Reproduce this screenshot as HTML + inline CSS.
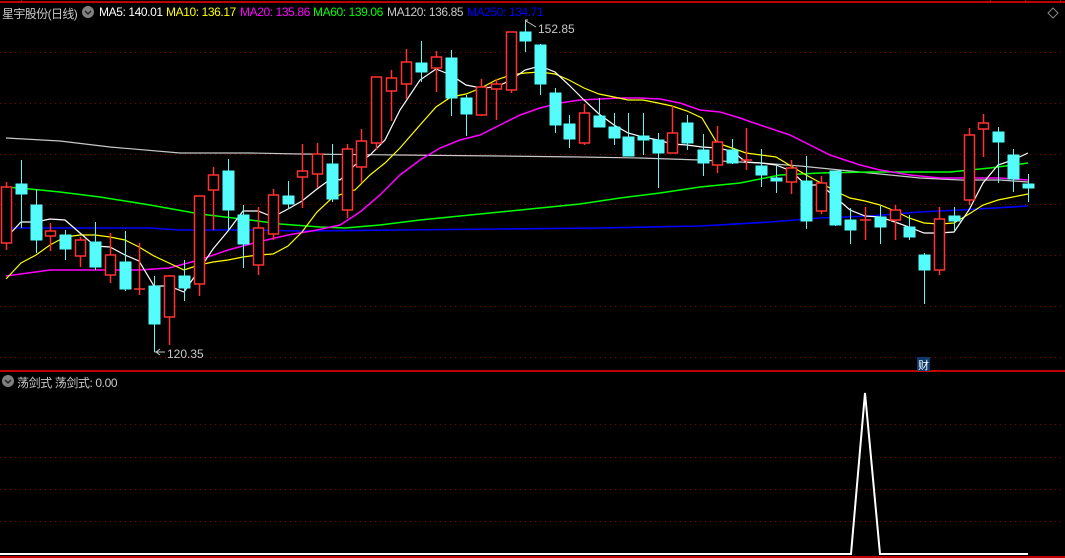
<!DOCTYPE html><html><head><meta charset="utf-8"><style>
html,body{margin:0;padding:0;background:#000;width:1065px;height:558px;overflow:hidden}
.t{position:absolute;font:12px "Liberation Sans","Noto Sans CJK SC",sans-serif;white-space:nowrap;top:5px;letter-spacing:-0.4px}
</style></head><body>
<svg width="1065" height="558" style="position:absolute;left:0;top:0" xmlns="http://www.w3.org/2000/svg">
<g stroke="#8a0000" stroke-dasharray="1,4" stroke-width="1">
<line x1="0" y1="52.5" x2="1065" y2="52.5"/><line x1="0" y1="103.5" x2="1065" y2="103.5"/><line x1="0" y1="154.5" x2="1065" y2="154.5"/><line x1="0" y1="204.5" x2="1065" y2="204.5"/><line x1="0" y1="255.5" x2="1065" y2="255.5"/><line x1="0" y1="306.5" x2="1065" y2="306.5"/><line x1="0" y1="357.5" x2="1065" y2="357.5"/>
<line x1="0" y1="424.5" x2="1065" y2="424.5"/><line x1="0" y1="457.5" x2="1065" y2="457.5"/><line x1="0" y1="489.5" x2="1065" y2="489.5"/><line x1="0" y1="521.5" x2="1065" y2="521.5"/>
</g>
<g stroke="#c00000" stroke-width="2"><line x1="0" y1="2" x2="1065" y2="2"/><line x1="0" y1="371" x2="1065" y2="371"/><line x1="0" y1="557" x2="1065" y2="557"/></g>
<g stroke="#c00000" stroke-width="1"><line x1="21.5" y1="0" x2="21.5" y2="3"/><line x1="990.5" y1="0" x2="990.5" y2="3"/><line x1="1025.5" y1="0" x2="1025.5" y2="3"/><line x1="1060.5" y1="0" x2="1060.5" y2="3"/></g>
<path d="M1053 8 L1058 13 L1053 18 L1048 13 Z" fill="none" stroke="#888" stroke-width="1"/>
<g fill="none" stroke-width="1.2">
<polyline stroke="#c8c8c8" points="6,138 60,141 110,147 180,153 250,153 300,154 400,155 500,156 580,157 640,158 700,160 760,163 800,166 860,172 920,178 960,180 1000,180 1028,182"/>
<polyline stroke="#0000ff" stroke-width="1.6" points="6,228 150,228 180,230 250,230 300,231 400,230 500,229 600,228 700,226 770,222 820,218 870,216 920,212 960,210 1028,206"/>
<polyline stroke="#00ff00" stroke-width="1.5" points="6,187 30,189 60,192 100,197 150,205 200,214 250,220 280,224 320,227 345,228 380,225 420,220 460,216 500,212 540,208 580,204 620,198 660,193 700,187 740,183 780,175 820,173 870,172 910,172 950,172 990,168 1028,163"/>
<polyline stroke="#ff00ff" stroke-width="1.5" points="6,276 50,270 95,270 139,270 169,268 199,260 228,250 258,242 288,235 317,230 340,225 360,212 380,195 400,175 420,160 440,148 460,140 480,135 500,125 520,115 540,108 560,103 580,100 600,99 620,98 640,98 660,99 680,103 700,110 720,112 740,118 760,125 790,135 810,145 830,155 860,165 880,170 910,175 940,178 970,178 1000,178 1028,180"/>
<polyline stroke="#ffff00" points="6,279 21,263 36,255 50,245 65,237 80,235 95,235 110,237 125,240 139,247 154,256 169,263 184,270 199,265 213,262 228,260 243,257 258,255 273,254 288,246 302,232 317,212 332,198 347,192 355,190 370,175 385,163 400,148 420,125 436,107 451,97 466,94 481,88 496,80 511,75 525,73 540,72 555,74 569,80 584,88 599,94 614,97 628,100 643,100 658,103 672,106 687,111 702,118 717,143 732,148 746,153 761,155 776,157 791,166 806,175 821,183 835,191 850,198 865,201 880,205 895,211 909,218 924,223 939,224 954,223 969,214 983,205 998,200 1013,197 1028,194"/>
<polyline stroke="#ffffff" points="6,238 21,222 36,222 50,219 65,220 80,233 95,246 110,247 125,255 139,261 154,286 169,286 184,292 199,270 213,249 228,231 243,211 258,211 273,217 288,209 302,201 317,189 332,178 340,180 355,165 370,155 385,140 400,110 420,80 436,69 451,75 466,85 481,88 496,87 511,80 525,70 540,66 555,72 569,85 584,100 599,114 614,125 628,133 643,137 658,140 672,144 687,145 702,147 717,148 732,151 746,162 761,163 776,165 791,171 806,185 821,185 835,197 850,210 865,216 880,217 895,222 909,227 924,233 939,233 954,232 969,210 983,183 998,165 1013,160 1028,153"/>
</g>
<g fill="#54fcfc" stroke="#54fcfc" stroke-width="1">
<line x1="21.5" y1="160" x2="21.5" y2="228"/><rect x="16" y="184" width="11" height="10"/>
<line x1="36.5" y1="189" x2="36.5" y2="253"/><rect x="31" y="205" width="11" height="35"/>
<line x1="65.5" y1="230" x2="65.5" y2="260"/><rect x="60" y="235" width="11" height="14"/>
<line x1="95.5" y1="222" x2="95.5" y2="270"/><rect x="90" y="242" width="11" height="25"/>
<line x1="125.5" y1="231" x2="125.5" y2="291"/><rect x="120" y="262" width="11" height="27"/>
<line x1="154.5" y1="276" x2="154.5" y2="352"/><rect x="149" y="286" width="11" height="38"/>
<line x1="184.5" y1="260" x2="184.5" y2="301"/><rect x="179" y="276" width="11" height="12"/>
<line x1="228.5" y1="159" x2="228.5" y2="230"/><rect x="223" y="171" width="11" height="39"/>
<line x1="243.5" y1="205" x2="243.5" y2="268"/><rect x="238" y="215" width="11" height="29"/>
<line x1="288.5" y1="181" x2="288.5" y2="209"/><rect x="283" y="196" width="11" height="8"/>
<line x1="332.5" y1="144" x2="332.5" y2="202"/><rect x="327" y="164" width="11" height="35"/>
<line x1="421.5" y1="41" x2="421.5" y2="82"/><rect x="416" y="63" width="11" height="9"/>
<line x1="451.5" y1="50" x2="451.5" y2="116"/><rect x="446" y="58" width="11" height="40"/>
<line x1="466.5" y1="95" x2="466.5" y2="136"/><rect x="461" y="98" width="11" height="16"/>
<line x1="525.5" y1="24" x2="525.5" y2="52"/><rect x="520" y="32" width="11" height="9"/>
<line x1="540.5" y1="44" x2="540.5" y2="95"/><rect x="535" y="45" width="11" height="39"/>
<line x1="555.5" y1="88" x2="555.5" y2="133"/><rect x="550" y="93" width="11" height="32"/>
<line x1="569.5" y1="115" x2="569.5" y2="148"/><rect x="564" y="124" width="11" height="15"/>
<line x1="599.5" y1="98" x2="599.5" y2="127"/><rect x="594" y="116" width="11" height="11"/>
<line x1="614.5" y1="113" x2="614.5" y2="145"/><rect x="609" y="127" width="11" height="11"/>
<line x1="628.5" y1="113" x2="628.5" y2="156"/><rect x="623" y="137" width="11" height="19"/>
<line x1="643.5" y1="113" x2="643.5" y2="155"/><rect x="638" y="136" width="11" height="4"/>
<line x1="658.5" y1="133" x2="658.5" y2="188"/><rect x="653" y="140" width="11" height="13"/>
<line x1="687.5" y1="115" x2="687.5" y2="150"/><rect x="682" y="123" width="11" height="20"/>
<line x1="703.5" y1="134" x2="703.5" y2="176"/><rect x="698" y="150" width="11" height="13"/>
<line x1="732.5" y1="139" x2="732.5" y2="164"/><rect x="727" y="150" width="11" height="13"/>
<line x1="761.5" y1="149" x2="761.5" y2="187"/><rect x="756" y="166" width="11" height="9"/>
<line x1="776.5" y1="165" x2="776.5" y2="193"/><rect x="771" y="178" width="11" height="3"/>
<line x1="806.5" y1="156" x2="806.5" y2="229"/><rect x="801" y="181" width="11" height="40"/>
<line x1="835.5" y1="171" x2="835.5" y2="226"/><rect x="830" y="171" width="11" height="54"/>
<line x1="850.5" y1="208" x2="850.5" y2="244"/><rect x="845" y="220" width="11" height="10"/>
<line x1="880.5" y1="206" x2="880.5" y2="244"/><rect x="875" y="217" width="11" height="10"/>
<line x1="909.5" y1="215" x2="909.5" y2="240"/><rect x="904" y="227" width="11" height="10"/>
<line x1="924.5" y1="253" x2="924.5" y2="304"/><rect x="919" y="255" width="11" height="15"/>
<line x1="954.5" y1="207" x2="954.5" y2="230"/><rect x="949" y="216" width="11" height="5"/>
<line x1="998.5" y1="127" x2="998.5" y2="183"/><rect x="993" y="132" width="11" height="10"/>
<line x1="1013.5" y1="149" x2="1013.5" y2="192"/><rect x="1008" y="155" width="11" height="24"/>
<line x1="1028.5" y1="174" x2="1028.5" y2="202"/><rect x="1023" y="184" width="11" height="4"/>
</g>
<g fill="#000" stroke="#ff3232" stroke-width="1.5">
<line x1="6.5" y1="182" x2="6.5" y2="250"/><rect x="1.5" y="187" width="10" height="56"/>
<line x1="50.5" y1="223" x2="50.5" y2="251"/><rect x="45.5" y="231" width="10" height="5"/>
<line x1="80.5" y1="237" x2="80.5" y2="267"/><rect x="75.5" y="240" width="10" height="16"/>
<line x1="110.5" y1="233" x2="110.5" y2="283"/><rect x="105.5" y="255" width="10" height="20"/>
<line x1="139.5" y1="243" x2="139.5" y2="295"/><line x1="134" y1="289" x2="145" y2="289"/>
<line x1="169.5" y1="275" x2="169.5" y2="345"/><rect x="164.5" y="276" width="10" height="41"/>
<line x1="199.5" y1="196" x2="199.5" y2="296"/><rect x="194.5" y="196" width="10" height="88"/>
<line x1="213.5" y1="167" x2="213.5" y2="230"/><rect x="208.5" y="175" width="10" height="15"/>
<line x1="258.5" y1="207" x2="258.5" y2="275"/><rect x="253.5" y="228" width="10" height="37"/>
<line x1="273.5" y1="189" x2="273.5" y2="240"/><rect x="268.5" y="195" width="10" height="39"/>
<line x1="302.5" y1="144" x2="302.5" y2="208"/><rect x="297.5" y="171" width="10" height="6"/>
<line x1="317.5" y1="143" x2="317.5" y2="188"/><rect x="312.5" y="154" width="10" height="20"/>
<line x1="347.5" y1="144" x2="347.5" y2="218"/><rect x="342.5" y="149" width="10" height="61"/>
<line x1="361.5" y1="129" x2="361.5" y2="183"/><rect x="356.5" y="141" width="10" height="26"/>
<line x1="376.5" y1="77" x2="376.5" y2="150"/><rect x="371.5" y="77" width="10" height="66"/>
<line x1="391.5" y1="70" x2="391.5" y2="121"/><rect x="386.5" y="78" width="10" height="13"/>
<line x1="406.5" y1="49" x2="406.5" y2="99"/><rect x="401.5" y="62" width="10" height="22"/>
<line x1="436.5" y1="51" x2="436.5" y2="92"/><rect x="431.5" y="57" width="10" height="11"/>
<line x1="481.5" y1="79" x2="481.5" y2="116"/><rect x="476.5" y="87" width="10" height="28"/>
<line x1="496.5" y1="79" x2="496.5" y2="120"/><rect x="491.5" y="84" width="10" height="5"/>
<line x1="511.5" y1="32" x2="511.5" y2="93"/><rect x="506.5" y="32" width="10" height="58"/>
<line x1="584.5" y1="104" x2="584.5" y2="145"/><rect x="579.5" y="113" width="10" height="30"/>
<line x1="672.5" y1="106" x2="672.5" y2="153"/><rect x="667.5" y="133" width="10" height="20"/>
<line x1="717.5" y1="126" x2="717.5" y2="173"/><rect x="712.5" y="142" width="10" height="23"/>
<line x1="746.5" y1="128" x2="746.5" y2="170"/><line x1="741" y1="160" x2="752" y2="160"/>
<line x1="791.5" y1="160" x2="791.5" y2="194"/><rect x="786.5" y="168" width="10" height="14"/>
<line x1="821.5" y1="176" x2="821.5" y2="214"/><rect x="816.5" y="183" width="10" height="28"/>
<line x1="865.5" y1="207" x2="865.5" y2="240"/><line x1="860" y1="220" x2="871" y2="220"/>
<line x1="895.5" y1="205" x2="895.5" y2="240"/><rect x="890.5" y="210" width="10" height="10"/>
<line x1="939.5" y1="207" x2="939.5" y2="275"/><rect x="934.5" y="219" width="10" height="51"/>
<line x1="969.5" y1="128" x2="969.5" y2="205"/><rect x="964.5" y="135" width="10" height="65"/>
<line x1="983.5" y1="114" x2="983.5" y2="157"/><rect x="978.5" y="123" width="10" height="6"/>
</g>
<g stroke="#c8c8c8" stroke-width="1" fill="none">
<path d="M525.5 24 V20 H528 M526 21 L536 27"/>
<path d="M154.5 352 H165 M156 352 L160 349 M156 352 L160 355"/>
</g>
<text x="538" y="33" fill="#c8c8c8" font-family="Liberation Sans" font-size="12">152.85</text>
<text x="167" y="358" fill="#c8c8c8" font-family="Liberation Sans" font-size="12">120.35</text>
<rect x="917" y="357" width="13" height="14" fill="#0b3a6a"/>
<text x="918" y="369" fill="#fff" font-family="Noto Sans CJK SC" font-size="11">财</text>
<polyline fill="none" stroke="#fff" stroke-width="2" points="0,554 851,554 865,393 880,554 1028,554"/>
<circle cx="88" cy="12" r="6" fill="#808080"/><path d="M85 11 L88 14 L91 11" stroke="#222" stroke-width="1.5" fill="none"/>
<circle cx="8" cy="381" r="6" fill="#808080"/><path d="M5 380 L8 383 L11 380" stroke="#222" stroke-width="1.5" fill="none"/>
</svg>
<div class="t" style="left:2px;color:#c8c8c8;letter-spacing:-0.6px">星宇股份(日线)</div>
<div class="t" style="left:99px;color:#fff">MA5: 140.01</div>
<div class="t" style="left:166px;color:#ffff00">MA10: 136.17</div>
<div class="t" style="left:240px;color:#ff00ff">MA20: 135.86</div>
<div class="t" style="left:313px;color:#00ff00">MA60: 139.06</div>
<div class="t" style="left:387px;color:#c8c8c8">MA120: 136.85</div>
<div class="t" style="left:467px;color:#0000ff">MA250: 134.71</div>
<div class="t" style="left:17px;top:374px;color:#c8c8c8">荡剑式 荡剑式: 0.00</div>
</body></html>
